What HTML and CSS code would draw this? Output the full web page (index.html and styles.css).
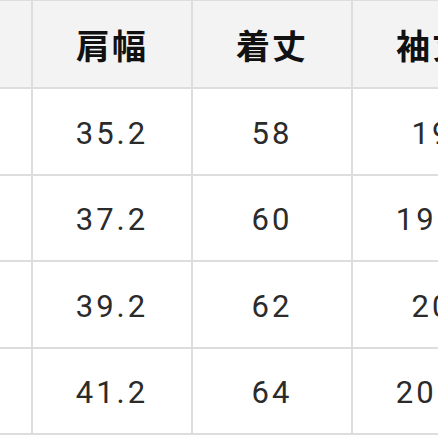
FILE: index.html
```html
<!DOCTYPE html>
<html lang="ja">
<head>
<meta charset="utf-8">
<link rel="stylesheet" href="styles.css">
</head>
<body>
<div class="table">
  <div class="cell head"></div>
  <div class="cell head">肩幅</div>
  <div class="cell head">着丈</div>
  <div class="cell head">袖丈</div>
  <div class="cell head"></div>

  <div class="cell"></div>
  <div class="cell num">35.2</div>
  <div class="cell num">58</div>
  <div class="cell num">19</div>
  <div class="cell"></div>

  <div class="cell"></div>
  <div class="cell num">37.2</div>
  <div class="cell num">60</div>
  <div class="cell num">19.5</div>
  <div class="cell"></div>

  <div class="cell"></div>
  <div class="cell num">39.2</div>
  <div class="cell num">62</div>
  <div class="cell num">20</div>
  <div class="cell"></div>

  <div class="cell"></div>
  <div class="cell num">41.2</div>
  <div class="cell num">64</div>
  <div class="cell num">20.5</div>
  <div class="cell"></div>
</div>
</body>
</html>
```
FILE: styles.css
```css
html, body {
  margin: 0;
  padding: 0;
  background: #ffffff;
  overflow: hidden;
  width: 438px;
  height: 438px;
}
.table {
  display: grid;
  grid-template-columns: 31px 158px 158px 158px 158px;
  grid-template-rows: 86px 84.5px 84.5px 84.5px 84.5px;
  gap: 2px;
  padding: 1px 0 2px 0;
  background: #dddddd;
  width: max-content;
}
.cell {
  background: #ffffff;
  display: flex;
  align-items: center;
  justify-content: center;
}
.head {
  background: #f3f3f3;
  font-family: "Noto Sans CJK JP", "Noto Sans", sans-serif;
  font-weight: 700;
  font-size: 34px;
  letter-spacing: 2px;
  color: #111111;
}
.num {
  padding-top: 4px;
  font-family: Roboto, "Noto Sans", sans-serif;
  font-size: 31px;
  letter-spacing: 3px;
  color: #2b2b2b;
}
```
